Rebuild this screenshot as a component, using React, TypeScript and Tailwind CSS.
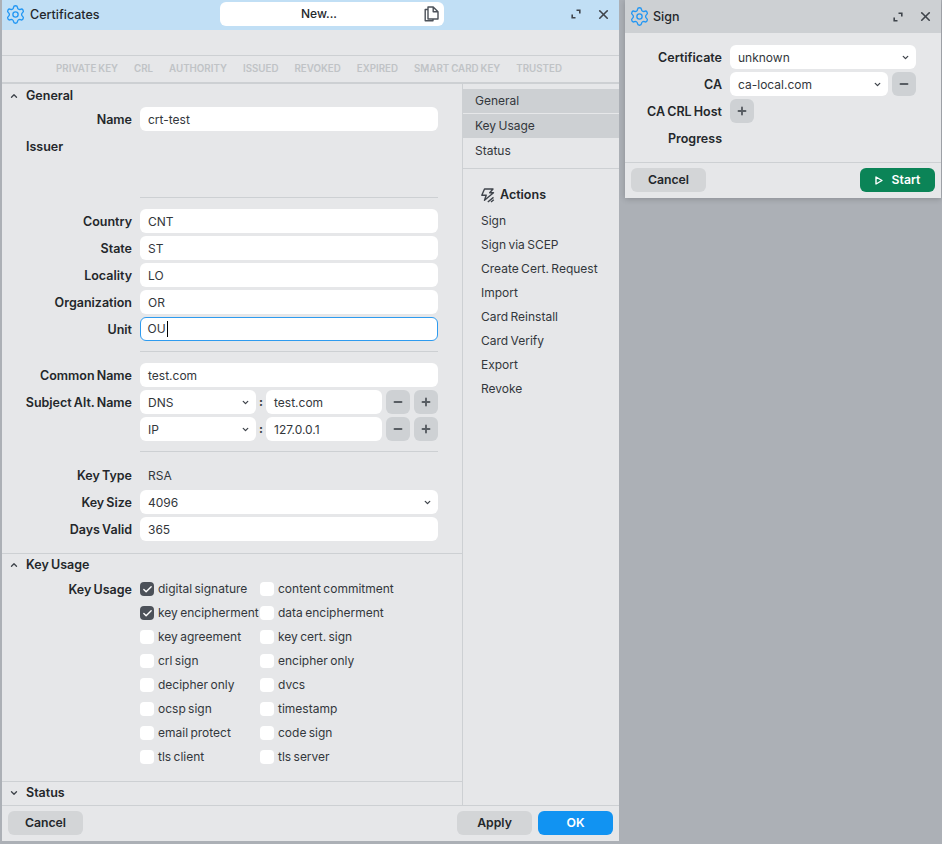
import type { ReactNode } from "react"
import { Check, ChevronDown, ChevronUp, Minus, Plus, Settings, X } from "lucide-react"

const tags = ["PRIVATE KEY", "CRL", "AUTHORITY", "ISSUED", "REVOKED", "EXPIRED", "SMART CARD KEY", "TRUSTED"]
const actions = ["Sign", "Sign via SCEP", "Create Cert. Request", "Import", "Card Reinstall", "Card Verify", "Export", "Revoke"]
const usages: [string, boolean, string][] = [
  ["digital signature", true, "content commitment"],
  ["key encipherment", true, "data encipherment"],
  ["key agreement", false, "key cert. sign"],
  ["crl sign", false, "encipher only"],
  ["decipher only", false, "dvcs"],
  ["ocsp sign", false, "timestamp"],
  ["email protect", false, "code sign"],
  ["tls client", false, "tls server"],
]

function ExpandIcon() {
  return (
    <svg width="10" height="10" viewBox="0 0 10 10" fill="none" stroke="#3f444b" strokeWidth="1.6">
      <path d="M1.2 5.5v3.3h3.3M5.5 1.2h3.3v3.3" />
    </svg>
  )
}

function WindowControls() {
  return (
    <div className="flex items-center gap-[15px]">
      <ExpandIcon />
      <X size={15} strokeWidth={2.6} color="#3f444b" />
    </div>
  )
}

function Label({ children }: { children: ReactNode }) {
  return <div className="w-[130px] shrink-0 pt-[2px] text-right text-[12.5px] font-semibold text-[#24272b]">{children}</div>
}

function Field({ value, focused }: { value?: string; focused?: boolean }) {
  return (
    <div
      className={`flex h-6 min-w-0 flex-1 items-center rounded-md bg-white text-[12px] text-[#33373c] ${
        focused ? "border-[1.5px] border-[#2e9bef] pl-[6.5px]" : "pl-2 pt-px"
      }`}
    >
      {value}
      {focused && <span className="ml-px h-4 w-px bg-black" />}
    </div>
  )
}

function Select({ value, className }: { value: string; className: string }) {
  return (
    <div className={`flex h-6 items-center justify-between rounded-md bg-white pl-2 pr-1.5 pt-px text-[12px] text-[#33373c] ${className}`}>
      {value}
      <ChevronDown size={9} strokeWidth={3.5} color="#3f444b" />
    </div>
  )
}

function IconButton({ kind }: { kind: "minus" | "plus" }) {
  return (
    <div className="flex h-6 w-6 shrink-0 items-center justify-center rounded-md bg-[#ced1d4]">
      {kind === "minus" ? <Minus size={12} strokeWidth={3.8} color="#585d63" /> : <Plus size={12} strokeWidth={3.8} color="#585d63" />}
    </div>
  )
}

function Row({ label, children }: { label?: string; children: ReactNode }) {
  return (
    <div className="flex h-6 items-center gap-2">
      <Label>{label}</Label>
      <div className="flex min-w-0 flex-1 items-center">{children}</div>
    </div>
  )
}

function SanRow({ label, type, value }: { label?: string; type: string; value: string }) {
  return (
    <Row label={label}>
      <Select value={type} className="w-[116px]" />
      <span className="w-[10px] shrink-0 text-center text-[12px] font-bold leading-none text-[#33373c]">:</span>
      <Field value={value} />
      <div className="ml-1 flex gap-1">
        <IconButton kind="minus" />
        <IconButton kind="plus" />
      </div>
    </Row>
  )
}

function Divider({ className }: { className: string }) {
  return <div className={`ml-[138px] h-px bg-[#cdd0d3] ${className}`} />
}

function Box({ checked }: { checked: boolean }) {
  return (
    <div className={`flex h-[14px] w-[14px] shrink-0 items-center justify-center rounded-[4px] ${checked ? "bg-[#4c5159]" : "bg-white"}`}>
      {checked && <Check size={11} strokeWidth={3} color="#ffffff" />}
    </div>
  )
}

function Usage({ text, checked, width }: { text: string; checked: boolean; width: string }) {
  return (
    <div className={`flex items-center gap-[4px] ${width}`}>
      <Box checked={checked} />
      <span className="whitespace-nowrap text-[12px] text-[#33373c]">{text}</span>
    </div>
  )
}

function SectionHead({ title, open }: { title: string; open: boolean }) {
  return (
    <div className="flex h-[22px] items-center text-[12.5px] font-semibold text-[#24272b]">
      <div className="flex w-6 justify-center">
        {open ? <ChevronUp size={10} strokeWidth={3.2} color="#3f444b" /> : <ChevronDown size={10} strokeWidth={3.2} color="#3f444b" />}
      </div>
      {title}
    </div>
  )
}

function FootButton({ text, className }: { text: string; className: string }) {
  return <div className={`flex h-6 items-center justify-center rounded-md text-[12.25px] font-semibold ${className}`}>{text}</div>
}

function SignLabel({ children }: { children: ReactNode }) {
  return <div className="w-[97px] shrink-0 pt-[2px] text-right text-[12.5px] font-semibold">{children}</div>
}

export default function App() {
  return (
    <div className="flex h-[844px] w-[942px] items-start gap-[6px] overflow-hidden bg-[#acb0b6] pl-[2px] text-[#24272b] [font-family:Inter,'Liberation_Sans',sans-serif] [word-spacing:-1px]">
      {/* Certificates window */}
      <div className="flex h-[841px] w-[617px] shrink-0 flex-col bg-[#e6e7e9]">
        <div className="flex h-[30px] shrink-0 items-center bg-[#c1dff5] pb-[2px] pl-[3px] pr-[8.5px]">
          <Settings size={21} strokeWidth={1.5} color="#2196f3" />
          <span className="ml-[4px] w-[190px] pt-[2px] text-[12.5px] font-medium">Certificates</span>
          <div className="relative flex h-6 w-[224px] items-center justify-center rounded-md bg-white pr-[26px] text-[12px] font-medium">
            New...
            <svg className="absolute right-[5px] top-[4px]" width="15" height="16" viewBox="0 0 15 16" fill="none" stroke="#4c5159" strokeWidth="1.4" strokeLinejoin="round">
              <path d="M4 3.5H1.2v11.3H9V13" />
              <path d="M4 1h5.2L14 5.8V13H4zM9.2 1v4.8H14" />
            </svg>
          </div>
          <div className="flex-1" />
          <WindowControls />
        </div>
        <div className="h-[26px] shrink-0 border-b border-[#cdd0d3]" />
        <div className="flex h-[28px] shrink-0 items-center justify-center gap-4 border-b-2 border-[#cdd0d3] pr-[3px] pt-px text-[9.75px] font-semibold text-[#c0c3c6] [word-spacing:-0.5px]">
          {tags.map((t) => (
            <span key={t}>{t}</span>
          ))}
        </div>
        <div className="flex min-h-0 flex-1 border-b border-[#cdd0d3]">
          <div className="w-[461px] shrink-0 border-r border-[#cdd0d3]">
            <div className="pt-px">
              <SectionHead title="General" open />
            </div>
            <div className="flex flex-col gap-[3px] pr-6">
              <Row label="Name">
                <Field value="crt-test" />
              </Row>
              <div className="h-[24px] pl-6 pt-px text-[12.5px] font-semibold leading-6">Issuer</div>
              <Divider className="mb-[8px] mt-[36px]" />
              <Row label="Country">
                <Field value="CNT" />
              </Row>
              <Row label="State">
                <Field value="ST" />
              </Row>
              <Row label="Locality">
                <Field value="LO" />
              </Row>
              <Row label="Organization">
                <Field value="OR" />
              </Row>
              <Row label="Unit">
                <Field value="OU" focused />
              </Row>
              <Divider className="mb-[8px] mt-[7px]" />
              <Row label="Common Name">
                <Field value="test.com" />
              </Row>
              <SanRow label="Subject Alt. Name" type="DNS" value="test.com" />
              <SanRow type="IP" value="127.0.0.1" />
              <Divider className="mb-[8px] mt-[7px]" />
              <Row label="Key Type">
                <span className="pl-2 pt-px text-[12px] text-[#33373c]">RSA</span>
              </Row>
              <Row label="Key Size">
                <Select value="4096" className="flex-1" />
              </Row>
              <Row label="Days Valid">
                <Field value="365" />
              </Row>
            </div>
            <div className="mt-3 border-t border-[#cdd0d3]">
              <SectionHead title="Key Usage" open />
              <div className="flex pt-px">
                <div className="flex h-6 items-center">
                  <Label>Key Usage</Label>
                </div>
                <div className="ml-[8px] flex flex-col">
                  {usages.map(([a, on, b]) => (
                    <div key={a} className="flex h-6 items-center">
                      <Usage text={a} checked={on} width="w-[120px]" />
                      <Usage text={b} checked={false} width="" />
                    </div>
                  ))}
                </div>
              </div>
            </div>
            <div className="mt-3 border-t border-[#cdd0d3]">
              <SectionHead title="Status" open={false} />
            </div>
          </div>
          <div className="flex min-w-0 flex-1 flex-col pt-[5px] text-[12px] text-[#33373c]">
            <div className="flex h-6 items-center bg-[#cdd0d3] pl-3">General</div>
            <div className="mt-px flex h-6 items-center bg-[#cdd0d3] pl-3">Key Usage</div>
            <div className="mt-px flex h-6 items-center pl-3">Status</div>
            <div className="mt-[5px] border-t border-[#cdd0d3] pl-[17px] pt-[14px]">
              <div className="flex h-6 items-center gap-[5px] text-[12.5px] font-semibold text-[#24272b]">
                <svg width="15" height="15" viewBox="0 0 15 15" fill="none" stroke="#3f444b" strokeWidth="1.4" strokeLinejoin="round">
                  <path d="M4.5 1h8.5L9.7 4.8h3.8L4.5 12.2l1.7-5H1.8z" />
                  <path d="M7.8 14l5.7-4.6M11 14l2.8-2.2" />
                </svg>
                Actions
              </div>
              <div className="mt-[2px] flex flex-col">
                {actions.map((a) => (
                  <div key={a} className="flex h-6 items-center pl-px">
                    {a}
                  </div>
                ))}
              </div>
            </div>
          </div>
        </div>
        <div className="flex h-[35px] shrink-0 items-center px-[6px] pb-px">
          <FootButton text="Cancel" className="w-[75px] bg-[#d3d5d7]" />
          <div className="flex-1" />
          <FootButton text="Apply" className="w-[75px] bg-[#d3d5d7]" />
          <FootButton text="OK" className="ml-[6px] w-[75px] bg-[#1193f2] text-white" />
        </div>
      </div>

      {/* Sign window */}
      <div className="h-[198px] w-[316px] shrink-0 bg-[#e6e7e9] shadow-[0_1px_6px_rgba(0,0,0,0.2)]">
        <div className="flex h-[33px] items-center bg-[#cdd0d3] pl-[4px] pr-[8.5px]">
          <Settings size={21} strokeWidth={1.5} color="#2196f3" />
          <span className="ml-[3px] flex-1 pt-px text-[12.5px] font-medium">Sign</span>
          <WindowControls />
        </div>
        <div className="flex h-[130px] flex-col gap-[3px] border-b border-[#cdd0d3] pt-3">
          <div className="flex h-6 items-center gap-2">
            <SignLabel>Certificate</SignLabel>
            <Select value="unknown" className="w-[186px]" />
          </div>
          <div className="flex h-6 items-center gap-2">
            <SignLabel>CA</SignLabel>
            <Select value="ca-local.com" className="w-[158px]" />
            <div className="-ml-1">
              <IconButton kind="minus" />
            </div>
          </div>
          <div className="flex h-6 items-center gap-2">
            <SignLabel>CA CRL Host</SignLabel>
            <IconButton kind="plus" />
          </div>
          <div className="flex h-6 items-center gap-2">
            <SignLabel>Progress</SignLabel>
          </div>
        </div>
        <div className="flex h-[34px] items-center justify-between px-[6px]">
          <FootButton text="Cancel" className="w-[75px] bg-[#d3d5d7]" />
          <div className="flex h-6 w-[75px] items-center justify-center gap-[9px] rounded-md bg-[#0b8457] text-[12.25px] font-semibold text-white">
            <svg width="8" height="9" viewBox="0 0 8 9" fill="none" stroke="#ffffff" strokeWidth="1.4" strokeLinejoin="round">
              <path d="M1 1l6 3.5L1 8z" />
            </svg>
            Start
          </div>
        </div>
      </div>
    </div>
  )
}
